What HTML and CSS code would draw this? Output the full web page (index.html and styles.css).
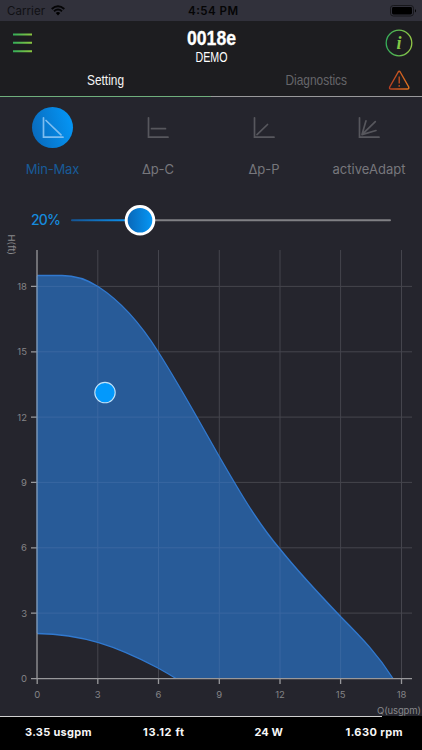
FILE: index.html
```html
<!DOCTYPE html>
<html lang="en">
<head>
<meta charset="utf-8">
<title>0018e</title>
<link rel="stylesheet" href="styles.css">
</head>
<body>
<div class="status">
  <div class="carrier"><svg width="68" height="14"><text x="0" y="10" textLength="38">Carrier</text></svg>
    <svg class="wifi" width="14" height="11" viewBox="0 0 14 11"><path d="M.7 4Q7-1.5 13.3 4M3 6.3Q7 2.8 11 6.3" fill="none" stroke="#050506" stroke-width="1.9"/><path d="M4.8 8Q7 6 9.2 8L7 10.4Z"/></svg>
  </div>
  <svg class="clock" width="52" height="14"><text x="0" y="10" textLength="50">4:54 PM</text></svg>
  <svg class="battery" width="27" height="12"><rect x=".5" y=".5" width="23" height="10.5" rx="2.8" fill="none" stroke="#17171b"/><rect x="2" y="2" width="20" height="7.5" rx="1.4"/><path d="M25 4q2 1.8 0 3.6z"/></svg>
</div>
<header>
  <div class="top">
    <svg class="menu" width="20" height="20"><defs><linearGradient id="green" gradientUnits="userSpaceOnUse" x1="0" y1="0" x2="20" y2="0"><stop stop-color="#33ad59"/><stop offset="1" stop-color="#91c83f"/></linearGradient></defs><path d="M0 1.5h19M0 9.8h19M0 18.2h19" stroke="url(#green)" stroke-width="2"/></svg>
    <svg class="title" width="60" height="46"><text class="name" x="6" y="24.3" textLength="49" lengthAdjust="spacingAndGlyphs">0018e</text><text class="sub" x="14.5" y="40.5" textLength="32" lengthAdjust="spacingAndGlyphs">DEMO</text></svg>
    <svg class="info" width="28" height="28"><defs><linearGradient id="ring"><stop stop-color="#35ae59"/><stop offset="1" stop-color="#92c846"/></linearGradient></defs><circle cx="14" cy="14" r="12.8" fill="none" stroke="url(#ring)" stroke-width="1.3"/><text x="14" y="19.8" text-anchor="middle">i</text></svg>
  </div>
  <nav>
    <svg class="tab on" width="211" height="30"><text x="87" y="19.5" textLength="37" lengthAdjust="spacingAndGlyphs">Setting</text></svg>
    <svg class="tab" width="211" height="30"><text x="74.5" y="19.5" textLength="61.5" lengthAdjust="spacingAndGlyphs">Diagnostics</text><defs><linearGradient id="warn"><stop stop-color="#b83f22"/><stop offset="1" stop-color="#df741f"/></linearGradient></defs><path d="M187.2 7Q188.2 5.5 189.2 7L197.7 22Q198.2 24 196.3 24H180Q178 24 178.7 22Z" fill="none" stroke="url(#warn)" stroke-width="1.4"/><path d="M188.2 11.5v7M188.2 20v1.8" stroke="#c95020" stroke-width="1.3"/></svg>
  </nav>
</header>
<section class="modes">
  <div class="mode active"><div class="icon"><svg width="22" height="22"><path d="M1.5 .8V20.2H21M4 3.5L19 17.8"/></svg></div><svg class="label" width="106" height="20"><text x="25.8" y="14.5" textLength="53.5">Min-Max</text></svg></div>
  <div class="mode"><div class="icon"><svg width="22" height="22"><path d="M1.5 .8V20.2H21M4.5 11.7H18.5"/></svg></div><svg class="label" width="106" height="20"><text x="37" y="14.5" textLength="32">Δp-C</text></svg></div>
  <div class="mode"><div class="icon"><svg width="22" height="22"><path d="M1.5 .8V20.2H21M4 17.6L14.5 7.5"/></svg></div><svg class="label" width="106" height="20"><text x="37.5" y="14.5" textLength="31">Δp-P</text></svg></div>
  <div class="mode"><div class="icon"><svg width="22" height="22"><path d="M1.5 .8V20.2H21M4 17.6L17.3 4.7M4 17.6L8 3.8M4 17.6L18 13.5M8 13.5L4 17.6"/></svg></div><svg class="label" width="106" height="20"><text x="16.5" y="14.5" textLength="73">activeAdapt</text></svg></div>
</section>
<svg class="slider" width="422" height="36" viewBox="0 202 422 36">
  <defs><linearGradient id="track" gradientUnits="userSpaceOnUse" x1="71" y1="0" x2="126" y2="0"><stop stop-color="#155492"/><stop offset="1" stop-color="#0b91ef"/></linearGradient><linearGradient id="knob"><stop stop-color="#0965b5"/><stop offset="1" stop-color="#0599f8"/></linearGradient></defs>
  <text x="31" y="225" textLength="30">20%</text>
  <rect x="71" y="219.3" width="60" height="2" rx="1" fill="url(#track)"/>
  <rect x="140" y="219.3" width="251" height="2" rx="1" fill="#808084"/>
  <circle cx="140" cy="220.3" r="13.8" fill="url(#knob)" stroke="#fff" stroke-width="3"/>
</svg>
<svg class="chart" width="422" height="478" viewBox="0 238 422 478">
  <defs><path id="upper" d="M37 275.5H62C75 275.5 87 279.5 98 286.5C122 302 142 326 158 351.5C180 386 199 421 219 456C238 489 257 522 280 549C300 574 320 595 341 617C363 639 378 655 393 678.5"/><path id="lower" d="M37 633.5C82 634 116 646 158 668Q167 673 176 678.5"/></defs>
  <path d="M97.8 250V678M158.5 250V678M219.3 250V678M280 250V678M340.6 250V678M401.5 250V678M37 286.4H412M37 351.8H412M37 417.1H412M37 482.4H412M37 547.8H412M37 613.1H412" stroke="#45454d"/>
  <path d="M37 275.5H62C75 275.5 87 279.5 98 286.5C122 302 142 326 158 351.5C180 386 199 421 219 456C238 489 257 522 280 549C300 574 320 595 341 617C363 639 378 655 393 678.5H176Q167 673 158 668C116 646 82 634 37 633.5Z" fill="#285b98"/>
  <path d="M97.8 287V641M158.5 353V667M219.3 457V678M280 550V678M340.6 618V678M37 286.4H97M37 351.8H158M37 417.1H197M37 482.4H234M37 547.8H279M37 613.1H337" stroke="#3967a1"/>
  <g fill="none" stroke="#3179cf" stroke-width="1.3"><use href="#upper"/><use href="#lower"/></g>
  <path d="M37 250V276M37 633V679M31 286.4h6M31 351.8h6M31 417.1h6M31 482.4h6M31 547.8h6M31 613.1h6M31 678.6H412M37.2 678v6M97.8 678v6M158.5 678v6M219.3 678v6M280 678v6M340.6 678v6M401.5 678v6" stroke="#98989b" stroke-width="1.3"/>
  <path d="M37 276V633" stroke="#7894b5" stroke-width="1.5"/>
  <circle cx="105" cy="392.6" r="10.2" fill="#0399fc" stroke="#c1e3fa" stroke-width="1.1"/>
  <g class="ticks" text-anchor="end"><text x="27" y="289.9">18</text><text x="27" y="355.3">15</text><text x="27" y="420.6">12</text><text x="27" y="485.9">9</text><text x="27" y="551.3">6</text><text x="27" y="616.6">3</text><text x="27" y="682">0</text></g>
  <g class="ticks" text-anchor="middle"><text x="37.2" y="697.7">0</text><text x="97.8" y="697.7">3</text><text x="158.5" y="697.7">6</text><text x="219.3" y="697.7">9</text><text x="280" y="697.7">12</text><text x="340.6" y="697.7">15</text><text x="401.5" y="697.7">18</text></g>
  <g class="axis"><text transform="translate(7.8 234.5) rotate(90)" textLength="20.5">H(ft)</text><text x="377" y="713.5" textLength="44">Q(usgpm)</text></g>
</svg>
<footer>
  <svg width="422" height="34"><text x="25" y="20" textLength="66.5">3.35 usgpm</text><text x="143" y="20" textLength="41">13.12 ft</text><text x="254.5" y="20" textLength="28.5">24 W</text><text x="345.5" y="20" textLength="57">1.630 rpm</text></svg>
</footer>
</body>
</html>
```
FILE: styles.css
```css
* { box-sizing: border-box; }
body { margin: 0; width: 422px; height: 750px; overflow: hidden; background: #25252d; font-family: Inter, "Liberation Sans", sans-serif; }
svg { display: block; flex: none; overflow: visible; }
.status { height: 21px; background: #31313b; display: grid; grid-template-columns: 187.5px 1fr 33px; padding-top: 5px; }
.carrier { display: flex; padding-left: 7px; }
.carrier > svg:first-child { width: 44px; }
.carrier text { font-size: 11.5px; fill: #101014; }
.clock text { font-size: 11.5px; font-weight: 600; fill: #050506; }
.battery { margin-left: 1px; }
header { height: 76px; background: #1d1d20; border-bottom: 1px solid #99999b; border-image: linear-gradient(90deg, #6fae7c 50%, #99999b 50%) 1; }
.top { height: 44px; display: grid; grid-template-columns: 167px 218px 28px; align-items: start; padding-left: 0; }
.menu { margin: 12px 0 0 13px; }
.title { margin-left: 13.5px; }
.info { margin-top: 8px; }
.title text, .tab text { font-family: "Liberation Sans Narrow", "Liberation Sans", sans-serif; fill: #fff; }
.title .name { font-size: 20.5px; font-weight: 700; stroke: #fff; stroke-width: .3; }
.title .sub { font-size: 14.5px; }
.info text { font-family: "Liberation Serif", serif; font-size: 18px; font-weight: 700; font-style: italic; fill: #83c747; }
nav { display: flex; height: 31px; }
nav .tab text { font-size: 15px; fill: #66666a; }
nav .tab.on text { fill: #f4f4f4; }
.modes { display: grid; grid-template-columns: 105.5px 105.5px 105.5px 105.5px; height: 105px; padding-top: 10px; }
.mode { display: flex; flex-direction: column; align-items: center; }
.icon { width: 41px; height: 41px; border-radius: 50%; display: flex; align-items: center; justify-content: center; }
.icon path { fill: none; stroke: #57575d; stroke-width: 1.7; stroke-linecap: round; }
.active .icon { background: linear-gradient(75deg, #0967b8, #049afb); }
.active .icon path { stroke: #7dbdf0; }
.label { margin-top: 11px; }
.label text { font-size: 13px; fill: #77777c; }
.active .label text { fill: #185b99; }
.slider text { font-size: 14px; font-weight: 500; fill: #168bdd; }
.ticks text { font-size: 9.5px; fill: #848487; }
.axis text { font-size: 9.5px; fill: #88888b; }
footer { height: 34px; background: linear-gradient(90deg, #d0d0d0 382px, #000 382px) 0 0 / 100% 1px no-repeat #000; }
footer text { font-size: 11px; font-weight: 700; fill: #f7f7f7; }
```
